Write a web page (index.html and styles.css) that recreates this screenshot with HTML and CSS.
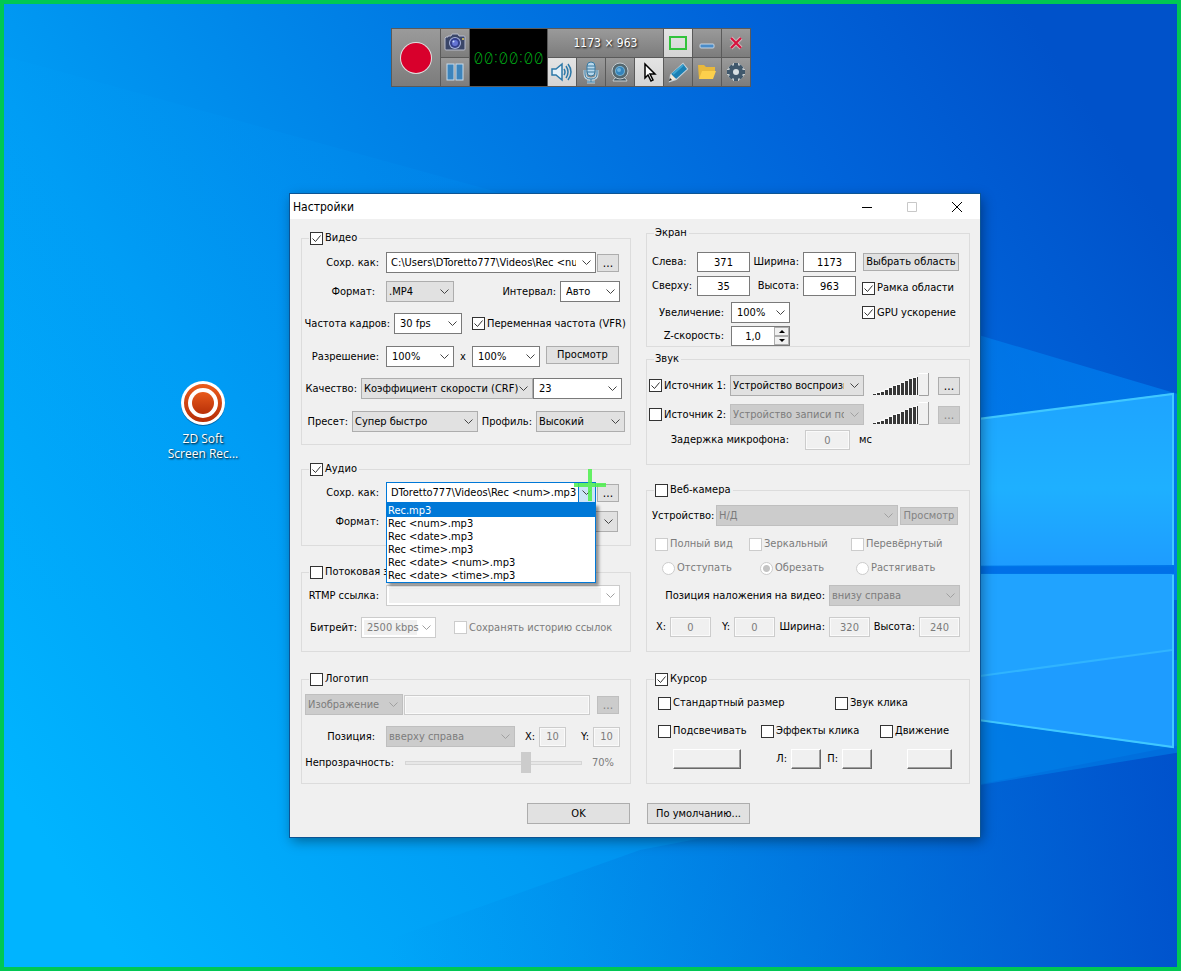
FILE: index.html
```html
<!DOCTYPE html>
<html lang="ru">
<head>
  <meta charset="UTF-8">
  <meta name="viewport" content="width=device-width, initial-scale=1.0">
  <title>Настройки</title>
  <link rel="stylesheet" href="styles.css">
</head>
<body>
  <div class="desktop">
    <svg class="wallpaper" viewBox="0 0 1181 971" preserveAspectRatio="none" aria-hidden="true">
      <defs>
        <linearGradient id="sky" x1="0" y1="0.8" x2="1" y2="0.25">
          <stop offset="0" stop-color="#00b4ff"/>
          <stop offset="0.3" stop-color="#009cf4"/>
          <stop offset="0.55" stop-color="#0080e6"/>
          <stop offset="0.8" stop-color="#0064da"/>
          <stop offset="1" stop-color="#0052ca"/>
        </linearGradient>
        <linearGradient id="beam" x1="0" y1="0" x2="1" y2="0">
          <stop offset="0" stop-color="#00a8ff" stop-opacity="0.08"/>
          <stop offset="0.5" stop-color="#00a0ff" stop-opacity="0.12"/>
          <stop offset="1" stop-color="#0090ff" stop-opacity="0.5"/>
        </linearGradient>
        <linearGradient id="floor" x1="0" y1="0" x2="1" y2="0">
          <stop offset="0.1" stop-color="#0078dc" stop-opacity="0"/>
          <stop offset="1" stop-color="#004cc8" stop-opacity="0.8"/>
        </linearGradient>
        <linearGradient id="pane" x1="0" y1="0" x2="0" y2="1">
          <stop offset="0" stop-color="#1ea4ff"/>
          <stop offset="0.55" stop-color="#1eb0ff"/>
          <stop offset="1" stop-color="#1e9cff"/>
        </linearGradient>
      </defs>
      <rect width="1181" height="971" fill="url(#sky)"/>
      <polygon points="0,55 490,190 1181,395 1181,600 0,600" fill="url(#beam)"/>
      <polygon points="640,850 1181,745 1181,971 300,971" fill="url(#floor)"/>
      <polygon points="900,660 1181,660 1181,752 980,785 900,800" fill="#0080e8" opacity="0.6"/>
      <polygon points="900,430 1174,393 1174,565 900,566" fill="url(#pane)"/>
      <polygon points="900,574 1174,574 1174,748 900,710" fill="#1e9cff"/>
      <polygon points="900,574 1174,574 1174,650 900,688" fill="#22a8ff" opacity="0.6"/>
      <path d="M900 570H1174" stroke="#0070e8" stroke-width="7"/>
      <path d="M900 429L1173 394V565M1173 575V747L900 709" fill="none" stroke="#40c8ff" stroke-width="2"/>
      <path d="M980 676L1172 650" stroke="#30b4ff" stroke-width="2"/>
    </svg>

    <a class="shortcut" href="#">
      <svg width="46" height="46" viewBox="0 0 46 46" aria-hidden="true">
        <defs>
          <linearGradient id="disc" x1="0" y1="0" x2="0" y2="1">
            <stop offset="0" stop-color="#e85a1c"/>
            <stop offset="1" stop-color="#b83008"/>
          </linearGradient>
        </defs>
        <circle cx="23" cy="24" r="22" fill="#044a80" opacity="0.7"/>
        <circle cx="23" cy="23" r="22" fill="#fff"/>
        <circle cx="23" cy="23" r="17" fill="none" stroke="url(#disc)" stroke-width="4"/>
        <circle cx="23" cy="23" r="11" fill="url(#disc)"/>
      </svg>
      <span>ZD Soft<br>Screen Rec...</span>
    </a>

    <div class="recorder">
      <button class="record" aria-label="Запись">
        <svg width="34" height="34" viewBox="0 0 34 34"><circle cx="17" cy="17" r="16" fill="#e0e0e0"/><circle cx="17" cy="17" r="15" fill="#d8002c"/></svg>
      </button>
      <button aria-label="Снимок">
        <svg width="24" height="24" viewBox="0 0 24 24"><path d="M3 6h2V5h3l1-2h6l1 2h5q1 0 1 1v12q0 1-1 1H3q-1 0-1-1V7z" fill="#3a4668" stroke="#b8bccc"/><circle cx="12" cy="12" r="6" fill="#a8b4dc"/><circle cx="12" cy="12" r="5" fill="#34408c"/><circle cx="12" cy="12" r="3" fill="#6474d4"/><circle cx="10.500" cy="10.500" r="1" fill="#cdf"/><path d="M19 8h2" stroke="#e8d060" stroke-width="1.500"/></svg>
      </button>
      <div class="timer">00:00:00</div>
      <div class="size">1173 × 963</div>
      <button class="on" aria-label="Рамка">
        <svg width="24" height="24" viewBox="0 0 24 24"><rect x="4" y="6" width="16" height="12" fill="none" stroke="#32c33c" stroke-width="2"/></svg>
      </button>
      <button aria-label="Свернуть">
        <svg width="24" height="24" viewBox="0 0 24 24"><rect x="5" y="13" width="14" height="4" rx="1" fill="#4a8cc8" stroke="#c8d4e0"/></svg>
      </button>
      <button aria-label="Закрыть">
        <svg width="24" height="24" viewBox="0 0 24 24"><path d="M7 7l10 10M17 7L7 17" stroke="#d0b4b8" stroke-width="4"/><path d="M7 7l10 10M17 7L7 17" stroke="#d8103c" stroke-width="2"/></svg>
      </button>
      <button aria-label="Пауза">
        <svg width="24" height="24" viewBox="0 0 24 24"><g fill="#3c84bc" stroke="#c8dcec"><rect x="4" y="4" width="7" height="16"/><rect x="13" y="4" width="7" height="16"/></g></svg>
      </button>
      <button class="on" aria-label="Звук">
        <svg width="24" height="24" viewBox="0 0 24 24" fill="none" stroke="#2c78a8" stroke-width="1.500"><path d="M2 9h4l6-5v16l-6-5H2z" fill="#e4f0f8"/><path d="M14 9q2 3 0 6M16 6q4 6 0 12M18 4q6 8 0 16"/></svg>
      </button>
      <button aria-label="Микрофон">
        <svg width="24" height="24" viewBox="0 0 24 24" fill="none"><path d="M6 10v4q0 5 6 5t6-5v-4M12 19v3M8 22h8" stroke="#c4d8e4" stroke-width="3"/><rect x="8" y="2" width="8" height="14" rx="4" fill="#b8d8ec" stroke="#3878a0"/><path d="M8 6h8M8 9h8M8 12h8M6 10v4q0 5 6 5t6-5v-4M12 19v3M8 22h8" stroke="#3878a0"/></svg>
      </button>
      <button aria-label="Камера">
        <svg width="24" height="24" viewBox="0 0 24 24"><path d="M5 21q1-4 7-4t7 4z" fill="#455a64" stroke="#c4ccd0"/><circle cx="12" cy="11" r="8" fill="#54676f" stroke="#c4ccd0"/><circle cx="12" cy="11" r="5" fill="#78b4d4"/><circle cx="12" cy="11" r="4" fill="#3484bc"/><circle cx="11" cy="10" r="2" fill="#70b4dc"/></svg>
      </button>
      <button class="on" aria-label="Курсор">
        <svg width="24" height="24" viewBox="0 0 24 24"><path d="M8 4v14l3-3 3 6 2-1-3-6h5z" fill="#fff" stroke="#000" stroke-width="1.500"/></svg>
      </button>
      <button aria-label="Карандаш">
        <svg width="24" height="24" viewBox="0 0 24 24"><path d="M17 4l4 5-11 10-6 2 1-6z" fill="none" stroke="#c8d4dc" stroke-width="2"/><path d="M17 4l4 5-11 10-5-5z" fill="#1c80b4"/><path d="M5 14l5 5-6 2z" fill="#f4e8d8"/><path d="M4 18l2 2-3 1z" fill="#222"/><path d="M7 14L17 5" stroke="#40a4d0" stroke-width="2"/></svg>
      </button>
      <button aria-label="Папка">
        <svg width="24" height="24" viewBox="0 0 24 24"><path d="M3 5h6l2 2h9v5l-3 7H4z" fill="#e8b83c"/><path d="M4 19l3-8h14l-3 8z" fill="#fcd04c"/></svg>
      </button>
      <button aria-label="Параметры">
        <svg width="24" height="24" viewBox="0 0 24 24"><g stroke="#c4ccd0" stroke-width="6"><path d="M12 3v18M3 12h18M6 6l12 12M18 6L6 18"/></g><g stroke="#40586c" stroke-width="4"><path d="M12 3v18M3 12h18M6 6l12 12M18 6L6 18"/></g><circle cx="12" cy="12" r="7" fill="#40586c"/><circle cx="12" cy="12" r="3" fill="#d8e0e4"/></svg>
      </button>
    </div>

    <form class="dialog">
      <header class="titlebar">
        <h1>Настройки</h1>
        <button type="button" aria-label="Свернуть"><svg width="10" height="10"><path d="M0 5.500h10" stroke="#000"/></svg></button>
        <button type="button" aria-label="Развернуть" disabled><svg width="10" height="10"><path d="M.5 .5h9v9h-9z" fill="none" stroke="#c8c8c8"/></svg></button>
        <button type="button" aria-label="Закрыть"><svg width="12" height="12"><path d="M1 1l10 10M11 1L1 11" stroke="#000"/></svg></button>
      </header>

      <div class="columns">
        <div class="column">
          <fieldset class="video">
            <legend><label class="check"><input type="checkbox" checked>Видео</label></legend>
            <div class="row row-file">
              <label class="far" for="v-file">Сохр. как:</label>
              <select class="edit clip" id="v-file"><option>C:\Users\DToretto777\Videos\Rec &lt;num&gt;.mp4</option></select>
              <button type="button" class="dots">...</button>
            </div>
            <div class="row row-format gap-s">
              <label class="farther" for="v-format">Формат:</label>
              <select id="v-format"><option>.MP4</option></select>
              <label for="v-interval">Интервал:</label>
              <select class="edit tight" id="v-interval"><option>Авто</option></select>
            </div>
            <div class="row row-fps">
              <label for="v-fps">Частота кадров:</label>
              <select class="edit tight" id="v-fps"><option>30 fps</option></select>
              <label class="check"><input type="checkbox" checked>Переменная частота (VFR)</label>
            </div>
            <div class="row row-scale gap-l">
              <label class="far" for="v-sx">Разрешение:</label>
              <select class="edit tight" id="v-sx"><option>100%</option></select>
              <span class="times">x</span>
              <select class="edit tight" id="v-sy" aria-label="Высота"><option>100%</option></select>
              <button type="button" class="small">Просмотр</button>
            </div>
            <div class="row row-quality">
              <label for="v-quality">Качество:</label>
              <select id="v-quality"><option>Коэффициент скорости (CRF)</option></select>
              <select class="edit tight" id="v-crf" aria-label="CRF"><option>23</option></select>
            </div>
            <div class="row row-preset gap-l">
              <label for="v-preset">Пресет:</label>
              <select id="v-preset"><option>Супер быстро</option></select>
              <label for="v-profile">Профиль:</label>
              <select id="v-profile"><option>Высокий</option></select>
            </div>
          </fieldset>

          <fieldset class="audio">
            <legend><label class="check"><input type="checkbox" checked>Аудио</label></legend>
            <div class="row row-file">
              <label class="far" for="a-file">Сохр. как:</label>
              <div class="combo">
                <select class="edit open" id="a-file"><option>DToretto777\Videos\Rec &lt;num&gt;.mp3</option></select>
                <ul class="popup">
                  <li class="selected">Rec.mp3</li>
                  <li>Rec &lt;num&gt;.mp3</li>
                  <li>Rec &lt;date&gt;.mp3</li>
                  <li>Rec &lt;time&gt;.mp3</li>
                  <li>Rec &lt;date&gt; &lt;num&gt;.mp3</li>
                  <li>Rec &lt;date&gt; &lt;time&gt;.mp3</li>
                </ul>
                <span class="cross"></span>
              </div>
              <button type="button" class="dots">...</button>
            </div>
            <div class="row row-codec gap-s">
              <label class="far" for="a-format">Формат:</label>
              <select id="a-format"><option></option></select>
            </div>
          </fieldset>

          <fieldset class="stream">
            <legend><label class="check"><input type="checkbox">Потоковая з</label></legend>
            <div class="row row-rtmp">
              <label class="far" for="s-url">RTMP ссылка:</label>
              <select class="edit" id="s-url" disabled><option></option></select>
            </div>
            <div class="row row-bitrate">
              <label for="s-rate">Битрейт:</label>
              <select class="edit tight" id="s-rate" disabled><option>2500 kbps</option></select>
              <label class="check off"><input type="checkbox" disabled>Сохранять историю ссылок</label>
            </div>
          </fieldset>

          <fieldset class="logo">
            <legend><label class="check"><input type="checkbox">Логотип</label></legend>
            <div class="row row-image">
              <select disabled aria-label="Тип"><option>Изображение</option></select>
              <input type="text" disabled aria-label="Файл">
              <button type="button" class="dots" disabled>...</button>
            </div>
            <div class="row row-place">
              <label class="farther" for="l-pos">Позиция:</label>
              <select id="l-pos" disabled><option>вверху справа</option></select>
              <label for="l-x">X:</label>
              <input type="text" id="l-x" value="10" disabled>
              <label for="l-y">Y:</label>
              <input type="text" id="l-y" value="10" disabled>
            </div>
            <div class="row row-opacity">
              <label class="farther" for="l-op">Непрозрачность:</label>
              <input type="range" id="l-op" value="70" disabled>
              <output class="off" for="l-op">70%</output>
            </div>
          </fieldset>
        </div>

        <div class="column">
          <fieldset class="screen">
            <legend>Экран</legend>
            <div class="row row-area">
              <label class="left" for="x">Слева:</label>
              <input type="text" id="x" value="371">
              <label for="w">Ширина:</label>
              <input type="text" id="w" value="1173">
              <button type="button" class="small">Выбрать область</button>
            </div>
            <div class="row row-area">
              <label class="left" for="y">Сверху:</label>
              <input type="text" id="y" value="35">
              <label for="h">Высота:</label>
              <input type="text" id="h" value="963">
              <label class="check"><input type="checkbox" checked>Рамка области</label>
            </div>
            <div class="row row-zoom">
              <label class="far" for="zoom">Увеличение:</label>
              <select class="edit tight" id="zoom"><option>100%</option></select>
              <label class="check"><input type="checkbox" checked>GPU ускорение</label>
            </div>
            <div class="row row-zoom">
              <label class="far" for="zspeed">Z-скорость:</label>
              <div class="spin">
                <input type="text" id="zspeed" value="1,0">
                <button type="button" aria-label="Больше"><svg width="6" height="3"><path d="M0 3l3-3 3 3z"/></svg></button>
                <button type="button" aria-label="Меньше"><svg width="6" height="3"><path d="M0 0l3 3 3-3z"/></svg></button>
              </div>
            </div>
          </fieldset>

          <fieldset class="sound">
            <legend>Звук</legend>
            <div class="row row-source">
              <label class="check"><input type="checkbox" checked>Источник 1:</label>
              <select class="clip" aria-label="Источник 1"><option>Устройство воспроизведения</option></select>
              <svg class="meter" width="56" height="23" viewBox="0 0 56 23"><path d="M45.500 .5H55" stroke="#fff"/><path d="M55.500 0V22.500H46" fill="none" stroke="#a0a0a0"/><path d="M0 21L44 3V22H0z" fill="#fafafa"/><path d="M0 21h3v1H0zM4 20h3v2H4zM8 19h3v3H8zM12 17h3v5h-3zM16 15h3v7h-3zM20 13h3v9h-3zM24 12h3v10h-3zM28 10h3v12h-3zM32 8h3v14h-3zM36 6h3v16h-3zM40 5h3v17h-3zM44 4h1v18h-1z" fill="#383838"/></svg>
              <button type="button" class="dots">...</button>
            </div>
            <div class="row row-source gap-s">
              <label class="check"><input type="checkbox">Источник 2:</label>
              <select class="clip" disabled aria-label="Источник 2"><option>Устройство записи по умолчанию</option></select>
              <svg class="meter" width="56" height="23" viewBox="0 0 56 23"><path d="M45.500 .5H55" stroke="#fff"/><path d="M55.500 0V22.500H46" fill="none" stroke="#a0a0a0"/><path d="M0 21L44 3V22H0z" fill="#fafafa"/><path d="M0 21h3v1H0zM4 20h3v2H4zM8 19h3v3H8zM12 17h3v5h-3zM16 15h3v7h-3zM20 13h3v9h-3zM24 12h3v10h-3zM28 10h3v12h-3zM32 8h3v14h-3zM36 6h3v16h-3zM40 5h3v17h-3zM44 4h1v18h-1z" fill="#383838"/></svg>
              <button type="button" class="dots" disabled>...</button>
            </div>
            <div class="row row-delay">
              <label for="delay">Задержка микрофона:</label>
              <input type="text" id="delay" value="0" disabled>
              <span>мс</span>
            </div>
          </fieldset>

          <fieldset class="webcam">
            <legend><label class="check"><input type="checkbox">Веб-камера</label></legend>
            <div class="row row-device">
              <label class="left" for="device">Устройство:</label>
              <select id="device" disabled><option>Н/Д</option></select>
              <button type="button" class="small" disabled>Просмотр</button>
            </div>
            <div class="row row-flip">
              <label class="check off"><input type="checkbox" disabled>Полный вид</label>
              <label class="check off"><input type="checkbox" disabled>Зеркальный</label>
              <label class="check off"><input type="checkbox" disabled>Перевёрнутый</label>
            </div>
            <div class="row row-fit">
              <label class="check off"><input type="radio" name="fit" disabled>Отступать</label>
              <label class="check off"><input type="radio" name="fit" disabled checked>Обрезать</label>
              <label class="check off"><input type="radio" name="fit" disabled>Растягивать</label>
            </div>
            <div class="row row-overlay">
              <label for="overlay">Позиция наложения на видео:</label>
              <select id="overlay" disabled><option>внизу справа</option></select>
            </div>
            <div class="row row-rect">
              <label for="c-x">X:</label>
              <input type="text" id="c-x" value="0" disabled>
              <label for="c-y">Y:</label>
              <input type="text" id="c-y" value="0" disabled>
              <label for="c-w">Ширина:</label>
              <input type="text" id="c-w" value="320" disabled>
              <label for="c-h">Высота:</label>
              <input type="text" id="c-h" value="240" disabled>
            </div>
          </fieldset>

          <fieldset class="pointer">
            <legend><label class="check"><input type="checkbox" checked>Курсор</label></legend>
            <div class="row row-look">
              <label class="check"><input type="checkbox">Стандартный размер</label>
              <label class="check"><input type="checkbox">Звук клика</label>
            </div>
            <div class="row row-effects">
              <label class="check"><input type="checkbox">Подсвечивать</label>
              <label class="check"><input type="checkbox">Эффекты клика</label>
              <label class="check"><input type="checkbox">Движение</label>
            </div>
            <div class="row row-colors">
              <button type="button" class="swatch" aria-label="Цвет подсветки"></button>
              <label for="click-l">Л:</label>
              <button type="button" class="swatch" id="click-l"></button>
              <label for="click-r">П:</label>
              <button type="button" class="swatch" id="click-r"></button>
              <button type="button" class="swatch last" aria-label="Цвет движения"></button>
            </div>
          </fieldset>
        </div>
      </div>

      <footer class="actions">
        <button type="button">OK</button>
        <button type="button">По умолчанию...</button>
      </footer>
    </form>
  </div>
</body>
</html>
```
FILE: styles.css
```css
* {
  box-sizing: border-box;
}
body {
  margin: 0;
  font-family: "DejaVu Sans Condensed", "Noto Sans", sans-serif;
  font-size: 11px;
  line-height: 14px;
  color: #000;
}
button, input, select {
  margin: 0;
  padding: 0;
  font: inherit;
  color: inherit;
  border-radius: 0;
}
.desktop {
  position: relative;
  min-height: 100vh;
  border: 4px solid #00c853;
  overflow: hidden;
}
.wallpaper {
  position: absolute;
  left: -4px;
  top: -4px;
  width: calc(100% + 8px);
  height: calc(100% + 8px);
}

/* desktop shortcut */
.shortcut {
  position: absolute;
  left: 161px;
  top: 376px;
  width: 76px;
  display: flex;
  flex-direction: column;
  align-items: center;
  gap: 5px;
  font-family: "Open Sans", sans-serif;
  font-size: 12px;
  line-height: 15px;
  color: #fff;
  text-align: center;
  text-decoration: none;
  text-shadow: 1px 1px 2px #000;
}

/* recorder bar */
.recorder {
  position: absolute;
  left: 387px;
  top: 24px;
  display: grid;
  grid-template-columns: 48px 28px 77px repeat(7, 28px);
  grid-template-rows: 28px 28px;
  gap: 1px;
  padding: 1px;
  background: #5a5a5a;
}
.recorder button, .size {
  display: flex;
  align-items: center;
  justify-content: center;
  border: none;
  background: linear-gradient(#9a9a9a, #7c7c7c);
}
.recorder .record, .timer {
  grid-row: span 2;
}
.recorder .on {
  background: linear-gradient(#e4e4e4, #d4d4d4);
}
.timer {
  display: flex;
  align-items: center;
  justify-content: center;
  background: #000;
  color: #00b418;
  font-family: Inter, sans-serif;
  font-size: 16px;
  font-weight: 200;
  font-feature-settings: "zero", "tnum";
}
.size {
  grid-column: span 4;
  font-size: 12px;
  color: #fff;
  text-shadow: 1px 1px 2px #000;
}

/* settings window */
.dialog {
  position: absolute;
  left: 286px;
  top: 190px;
  width: 690px;
  background: #f0f0f0;
  box-shadow: 0 0 0 1px #0c5494, 2px 4px 12px rgba(0, 0, 0, 0.4);
}
.titlebar {
  display: flex;
  height: 25px;
  align-items: center;
  padding: 0 1px 0 3px;
  background: #fff;
}
.titlebar h1 {
  flex: 1;
  margin: 0;
  font-size: 12px;
  font-weight: normal;
}
.titlebar button {
  display: flex;
  width: 45px;
  height: 25px;
  align-items: center;
  justify-content: center;
  border: none;
  background: none;
}
.columns {
  display: grid;
  grid-template-columns: 330fr 324fr;
  column-gap: 15px;
  padding: 0 10px 0 11px;
}
.column {
  display: flex;
  flex-direction: column;
}
fieldset {
  margin: 0;
  padding: 0;
  min-width: 0;
  border: 1px solid #dcdcdc;
}
legend {
  height: 14px;
  margin-left: 7px;
  padding: 0 2px 0 1px;
}
.video { margin-top: 12px; padding: 7px 0 12px; }
.audio { margin-top: 17px; padding: 6px 0 13px; }
.stream { margin-top: 19px; padding: 6px 0 13px; }
.logo { margin-top: 20px; padding: 8px 0 10px; }
.screen { margin-top: 7px; padding: 12px 0 0; }
.sound { margin-top: 5px; padding: 9px 0 14px; }
.webcam { margin-top: 18px; padding: 8px 0 14px; }
.pointer { margin-top: 20px; padding: 10px 0 14px; }

.row {
  display: grid;
  align-items: center;
}
.row + .row {
  margin-top: 11px;
}
.row + .gap-s {
  margin-top: 8px;
}
.row + .gap-l {
  margin-top: 12px;
}
.row > label {
  padding-right: 4px;
  text-align: right;
  white-space: nowrap;
}
.row > .left {
  padding-left: 5px;
  text-align: left;
}
.row > .far {
  padding-right: 7px;
}
.row > .farther {
  padding-right: 11px;
}
.check {
  display: flex;
  align-items: center;
  gap: 2px;
  white-space: nowrap;
}
.row > .check {
  padding-right: 0;
}
.off, .row > .off {
  color: #7c7c7c;
}

/* controls */
select {
  appearance: none;
  width: 100%;
  height: 21px;
  padding: 0 13px 0 2px;
  border: 1px solid #adadad;
  background: #e1e1e1 url("data:image/svg+xml,%3Csvg xmlns='http://www.w3.org/2000/svg' width='9' height='6'%3E%3Cpath d='M.5 .5l4 4 4-4' fill='none' stroke='%23444'/%3E%3C/svg%3E") no-repeat right 4px center;
}
select.edit {
  padding-left: 4px;
  border-color: #7a7a7a;
  background-color: #fff;
}
select.tight {
  padding-left: 5px;
}
select.clip {
  padding-right: 19px;
}
select:disabled {
  color: #7c7c7c;
  opacity: 1;
  border-color: #bfbfbf;
  background-color: #ccc;
  background-image: url("data:image/svg+xml,%3Csvg xmlns='http://www.w3.org/2000/svg' width='9' height='6'%3E%3Cpath d='M.5 .5l4 4 4-4' fill='none' stroke='%23a0a0a0'/%3E%3C/svg%3E");
}
select.edit:disabled {
  border-color: #ccc;
  background:
    url("data:image/svg+xml,%3Csvg xmlns='http://www.w3.org/2000/svg' width='9' height='6'%3E%3Cpath d='M.5 .5l4 4 4-4' fill='none' stroke='%23a0a0a0'/%3E%3C/svg%3E") right 4px center no-repeat,
    linear-gradient(#f0f0f0, #f0f0f0) 2px 2px / calc(100% - 20px) 15px no-repeat,
    #fff;
}
select.open {
  padding-right: 17px;
  border-color: #0078d7;
  background-image: url("data:image/svg+xml,%3Csvg xmlns='http://www.w3.org/2000/svg' width='17' height='21'%3E%3Cpath d='M1 0h16v21h-16z' fill='%23cce4f7'/%3E%3Cpath d='M.5 0v21' stroke='%230078d7'/%3E%3Cpath d='M4.500 8.500l4 4 4-4' fill='none' stroke='%23444'/%3E%3C/svg%3E");
  background-position: right center;
}
input[type="text"] {
  width: 100%;
  height: 20px;
  border: 1px solid #7a7a7a;
  background: #fff;
  text-align: center;
}
input[type="text"]:disabled {
  color: #7c7c7c;
  border-color: #ccc;
  background: #f0f0f0;
  box-shadow: inset 0 0 0 1px #fafafa;
}
input[type="checkbox"], input[type="radio"] {
  appearance: none;
  flex: none;
  width: 13px;
  height: 13px;
  border: 1px solid #333;
  background: #fff;
}
input[type="checkbox"]:checked {
  background: #fff url("data:image/svg+xml,%3Csvg xmlns='http://www.w3.org/2000/svg' width='11' height='11'%3E%3Cpath d='M1.500 5.500l3 3 5-6' fill='none' stroke='%23333'/%3E%3C/svg%3E") center no-repeat;
}
input[type="radio"] {
  border-radius: 50%;
}
input[type="checkbox"]:disabled, input[type="radio"]:disabled {
  border-color: #ccc;
}
input[type="radio"]:checked {
  background: radial-gradient(circle, #c4c4c4 3px, #fff 4px);
}
input[type="range"] {
  appearance: none;
  width: 100%;
  height: 21px;
  background: linear-gradient(#e7e7e7, #e7e7e7) center / 100% 4px no-repeat;
}
input[type="range"]::-webkit-slider-runnable-track {
  height: 4px;
  border: 1px solid #d6d6d6;
}
input[type="range"]::-webkit-slider-thumb {
  appearance: none;
  width: 10px;
  height: 21px;
  margin-top: -10px;
  background: #ccc;
}
.dots, .small {
  height: 18px;
  border: 1px solid #adadad;
  background: #e1e1e1;
  white-space: nowrap;
}
.dots {
  width: 22px;
  margin-left: 1px;
  font-size: 12px;
  line-height: 12px;
}
.dots:disabled, .small:disabled {
  color: #838383;
  border-color: #bfbfbf;
  background: #ccc;
}
.swatch {
  height: 20px;
  border: 1px solid;
  border-color: #fff #696969 #696969 #fff;
  background: #f0f0f0;
  box-shadow: inset -1px -1px #a0a0a0;
}

/* left column rows */
.row-file { grid-template-columns: 84px 210px 23px; }
.row-format { grid-template-columns: 84px 68px 106px 60px; }
.row-fps { grid-template-columns: 92px 68px 1fr; }
.row-fps .check { padding-left: 10px; }
.row-scale { grid-template-columns: 84px 68px 18px 68px 79px; }
.row-scale .small { align-self: start; margin-left: 6px; }
.row-quality { grid-template-columns: 59px 172px 89px; }
.row-preset { grid-template-columns: 50px 126px 58px 89px; }
.row-codec { grid-template-columns: 84px 232px; }
.row-rtmp { grid-template-columns: 84px 234px; }
.row-bitrate { grid-template-columns: 59px 75px 1fr; }
.row-bitrate .check { padding-left: 18px; }
.row-image { grid-template-columns: 98px 186px 28px; column-gap: 1px; padding-left: 3px; }
.row-image .dots { margin-left: 6px; }
.row-place { grid-template-columns: 84px 129px 24px 27px 27px 27px; }
.row-place + .row { margin-top: 5px; }
.row-opacity { grid-template-columns: 103px 177px 1fr; }
.row-opacity output { padding-left: 10px; }
.times { text-align: center; }

/* right column rows */
.row-area { grid-template-columns: 50px 53px 53px 53px 103px; }
.row-area + .row-area { margin-top: 4px; }
.row-area + .row-zoom { margin-top: 6px; }
.row-area .small { margin-left: 7px; }
.row-area .check { padding: 4px 0 0 6px; }
.row-zoom { grid-template-columns: 84px 59px 1fr; }
.row-zoom + .row-zoom { margin-top: 3px; }
.row-zoom .check { padding-left: 72px; }
.row-source { grid-template-columns: 83px 134px 65px 31px; }
.row-source .check { padding-left: 2px; }
.row-source .dots, .meter { margin-left: 9px; }
.row-delay { grid-template-columns: 158px 45px 1fr; }
.row-source + .row-delay { margin-top: 5px; }
.row > label[for="delay"] { padding-right: 16px; }
.row-delay span { padding-left: 9px; }
.row-device { grid-template-columns: 69px 182px 60px; }
.row-device .small { margin-left: 2px; }
.row-flip { grid-template-columns: 94px 102px 1fr; padding-left: 8px; }
.row-fit { grid-template-columns: 98px 96px 1fr; padding-left: 15px; }
.row-flip + .row, .row-fit + .row { margin-top: 10px; }
.row-overlay { grid-template-columns: 182px 131px; }
.row-rect { grid-template-columns: 23px 41px 23px 41px 54px 41px 49px 41px; }
.row-look { grid-template-columns: 177px 1fr; padding-left: 11px; }
.row-effects { grid-template-columns: 103px 119px 1fr; padding-left: 11px; }
.row-look + .row { margin-top: 14px; }
.row-colors { grid-template-columns: 68px 50px 30px 21px 30px 80px; padding-left: 26px; }
.row-colors .last { margin-left: 35px; }
.meter { margin-top: -2px; }

.spin {
  display: grid;
  grid-template-columns: 1fr 15px;
  grid-template-rows: 9px 9px;
  border: 1px solid #7a7a7a;
  background: #fff;
}
.spin input[type="text"] {
  grid-row: span 2;
  height: 18px;
  border: none;
}
.spin button {
  display: flex;
  align-items: center;
  justify-content: center;
  border: 1px solid #adadad;
  background: #f0f0f0;
}

/* open list of the audio file name */
.combo {
  position: relative;
}
.combo select {
  display: block;
}
.popup {
  position: absolute;
  z-index: 1;
  left: 0;
  right: 0;
  top: 21px;
  margin: 0;
  padding: 0;
  border: 1px solid #0078d7;
  background: #fff;
  box-shadow: 3px 3px 3px rgba(0, 0, 0, 0.4);
  list-style: none;
}
.popup li {
  padding-left: 1px;
  line-height: 13px;
}
.popup .selected {
  background: #0078d7;
  color: #fff;
}
.cross {
  position: absolute;
  z-index: 2;
  right: -10px;
  top: -13px;
  width: 32px;
  height: 32px;
  background:
    linear-gradient(#4cf04c, #4cf04c) center / 4px 32px no-repeat,
    linear-gradient(#4cf04c, #4cf04c) center / 32px 4px no-repeat;
  opacity: 0.85;
}

.actions {
  display: flex;
  gap: 17px;
  padding: 19px 0 13px 237px;
}
.actions button {
  width: 103px;
  height: 21px;
  border: 1px solid #adadad;
  background: #e1e1e1;
}
```
